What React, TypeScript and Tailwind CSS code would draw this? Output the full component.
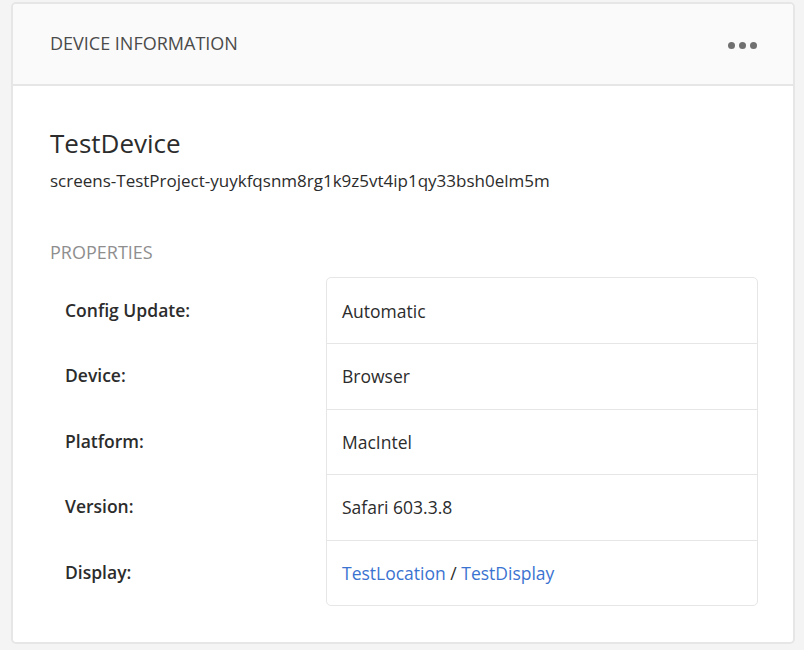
interface Property {
  label: string;
  value: React.ReactNode;
}

const PROPERTIES: Property[] = [
  { label: 'Config Update:', value: 'Automatic' },
  { label: 'Device:', value: 'Browser' },
  { label: 'Platform:', value: 'MacIntel' },
  { label: 'Version:', value: 'Safari 603.3.8' },
  {
    label: 'Display:',
    value: (
      <>
        <a href="#" className="text-[#3b73d1]">TestLocation</a>
        {' / '}
        <a href="#" className="text-[#3b73d1]">TestDisplay</a>
      </>
    ),
  },
];

export default function App() {
  return (
    <div
      className="min-h-[650px] bg-[#f4f4f4] pl-[11px] pr-[9px] pt-[2px] text-[#323232]"
      style={{ fontFamily: '"Open Sans", "Noto Sans", sans-serif' }}
    >
      <div className="rounded-[5px] border-2 border-[#e6e6e6] bg-white">
        {/* Header */}
        <div className="flex h-[82px] items-center justify-between rounded-t-[4px] border-b-2 border-[#e6e6e6] bg-[#fafafa] pl-[37px] pr-[36px]">
          <h2 className="mb-[3px] text-[18px] leading-[24px] text-[#4b4b4b]">DEVICE INFORMATION</h2>
          <button className="mt-[2px] flex gap-[4px]">
            <span className="h-[7px] w-[7px] rounded-full bg-[#707070]" />
            <span className="h-[7px] w-[7px] rounded-full bg-[#707070]" />
            <span className="h-[7px] w-[7px] rounded-full bg-[#707070]" />
          </button>
        </div>

        {/* Body */}
        <div className="pb-[36px] pl-[37px] pr-[35px] pt-[41px]">
          <h1 className="text-[26px] leading-[32px] text-[#2c2c2c]">TestDevice</h1>
          <p className="mt-[10px] text-[17px] leading-[24px] text-[#2c2c2c]">
            screens-TestProject-yuykfqsnm8rg1k9z5vt4ip1qy33bsh0elm5m
          </p>

          <h3 className="mt-[47px] text-[18px] leading-[24px] text-[#8e8e8e]">PROPERTIES</h3>

          <div className="mt-[13px] flex">
            <div className="flex w-[276px] flex-col pl-[15px]">
              {PROPERTIES.map((p) => (
                <div key={p.label} className="flex h-[65.6px] items-center text-[17.5px] font-semibold text-[#2c2c2c]">
                  {p.label}
                </div>
              ))}
            </div>
            <div className="flex-1 rounded-[5px] border border-[#e6e6e6]">
              {PROPERTIES.map((p, i) => (
                <div
                  key={p.label}
                  className={`flex h-[65.4px] items-center px-[15px] text-[17.5px] text-[#2c2c2c] ${
                    i > 0 ? 'border-t border-[#e6e6e6]' : ''
                  }`}
                >
                  <span>{p.value}</span>
                </div>
              ))}
            </div>
          </div>
        </div>
      </div>
    </div>
  );
}
